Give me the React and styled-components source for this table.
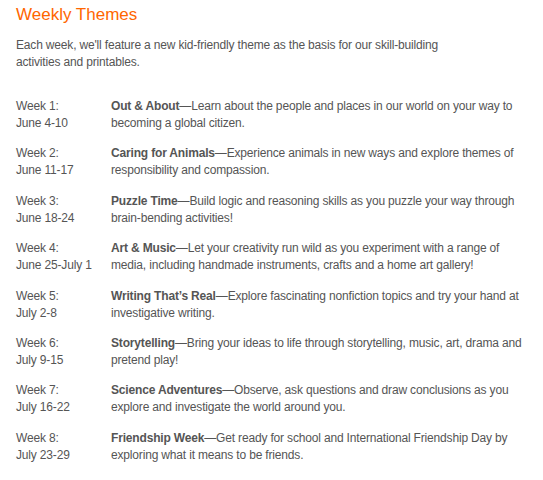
import React from 'react';
import styled, { createGlobalStyle } from 'styled-components';

const GlobalStyle = createGlobalStyle`
  body {
    margin: 0;
    background: #fff;
    font-family: "Liberation Sans", Arial, sans-serif;
  }
`;

const Page = styled.div`
  padding: 4px 16px 0 16px;
  width: 520px;
  color: #555;
  font-size: 12px;
  line-height: 17px;
  letter-spacing: -0.17px;
`;

const Title = styled.h2`
  margin: 0;
  font-size: 17px;
  font-weight: normal;
  line-height: 22px;
  letter-spacing: 0;
  color: #ff6600;
`;

const Intro = styled.p`
  margin: 11px 0 0 0;
  width: 440px;
`;

const Schedule = styled.div`
  margin-top: 27px;
  display: flex;
  flex-direction: column;
  gap: 13.4px;
`;

const Row = styled.div`
  display: grid;
  grid-template-columns: 95px 1fr;
`;

const When = styled.div`
  display: flex;
  flex-direction: column;
`;

const Theme = styled.div`
  padding-right: 6px;
`;

const Name = styled.strong`
  font-weight: bold;
`;

const weeks = [
  ['Week 1:', 'June 4-10', 'Out & About', 'Learn about the people and places in our world on your way to becoming a global citizen.'],
  ['Week 2:', 'June 11-17', 'Caring for Animals', 'Experience animals in new ways and explore themes of responsibility and compassion.'],
  ['Week 3:', 'June 18-24', 'Puzzle Time', 'Build logic and reasoning skills as you puzzle your way through brain-bending activities!'],
  ['Week 4:', 'June 25-July 1', 'Art & Music', 'Let your creativity run wild as you experiment with a range of media, including handmade instruments, crafts and a home art gallery!'],
  ['Week 5:', 'July 2-8', 'Writing That\u2019s Real', 'Explore fascinating nonfiction topics and try your hand at investigative writing.'],
  ['Week 6:', 'July 9-15', 'Storytelling', 'Bring your ideas to life through storytelling, music, art, drama and pretend play!'],
  ['Week 7:', 'July 16-22', 'Science Adventures', 'Observe, ask questions and draw conclusions as you explore and investigate the world around you.'],
  ['Week 8:', 'July 23-29', 'Friendship Week', 'Get ready for school and International Friendship Day by exploring what it means to be friends.'],
];

export default function App() {
  return (
    <Page>
      <GlobalStyle />
      <Title>Weekly Themes</Title>
      <Intro>
        Each week, we'll feature a new kid-friendly theme as the basis for our skill-building activities and printables.
      </Intro>
      <Schedule>
        {weeks.map(([week, dates, name, text]) => (
          <Row key={week}>
            <When>
              <span>{week}</span>
              <span>{dates}</span>
            </When>
            <Theme>
              <Name>{name}</Name>—{text}
            </Theme>
          </Row>
        ))}
      </Schedule>
    </Page>
  );
}
